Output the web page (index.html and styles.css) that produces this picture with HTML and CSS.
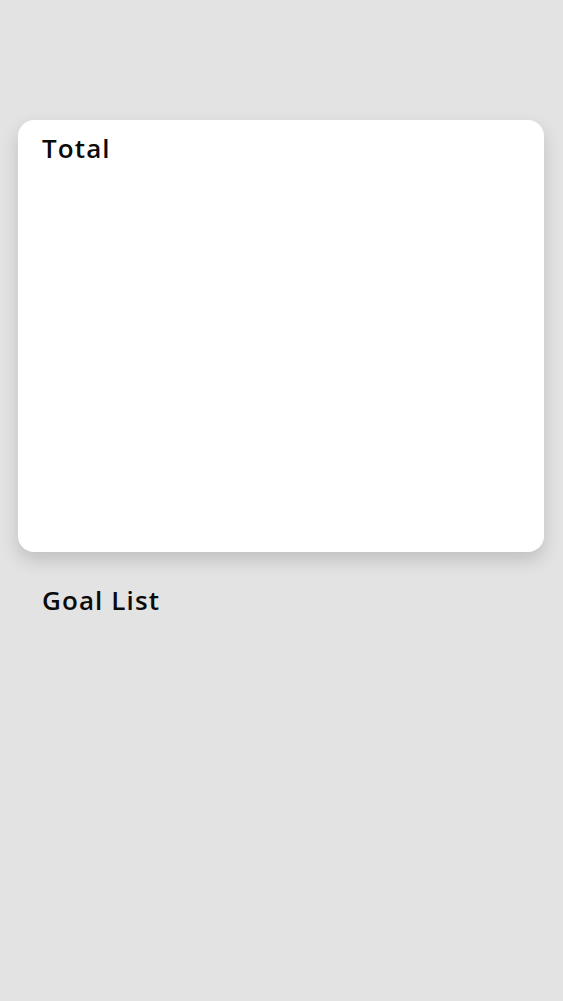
FILE: index.html
```html
<!DOCTYPE html>
<html>
<head>
<meta charset="utf-8">
<link rel="stylesheet" href="styles.css">
</head>
<body>
<main class="page">
  <section class="card">
    <h2 class="card-title">Total</h2>
  </section>
  <h2 class="section-title">Goal List</h2>
</main>
</body>
</html>
```
FILE: styles.css
```css
html, body {
  margin: 0;
  padding: 0;
  background: #e3e3e3;
}
body {
  font-family: "Open Sans", "Noto Sans", sans-serif;
  color: #0a0a0a;
  height: 1001px;
}
.page {
  padding: 120px 19px 0 18px;
  display: flex;
  flex-direction: column;
}
.card {
  background: #ffffff;
  border-radius: 16px;
  height: 432px;
  box-sizing: border-box;
  padding: 10px 24px;
  box-shadow: 0 8px 18px rgba(0, 0, 0, 0.16);
}
.card-title,
.section-title {
  margin: 0;
  font-size: 26px;
  font-weight: 600;
  line-height: 36px;
  letter-spacing: 1.1px;
}
.section-title {
  padding: 30px 24px 0;
}
```
